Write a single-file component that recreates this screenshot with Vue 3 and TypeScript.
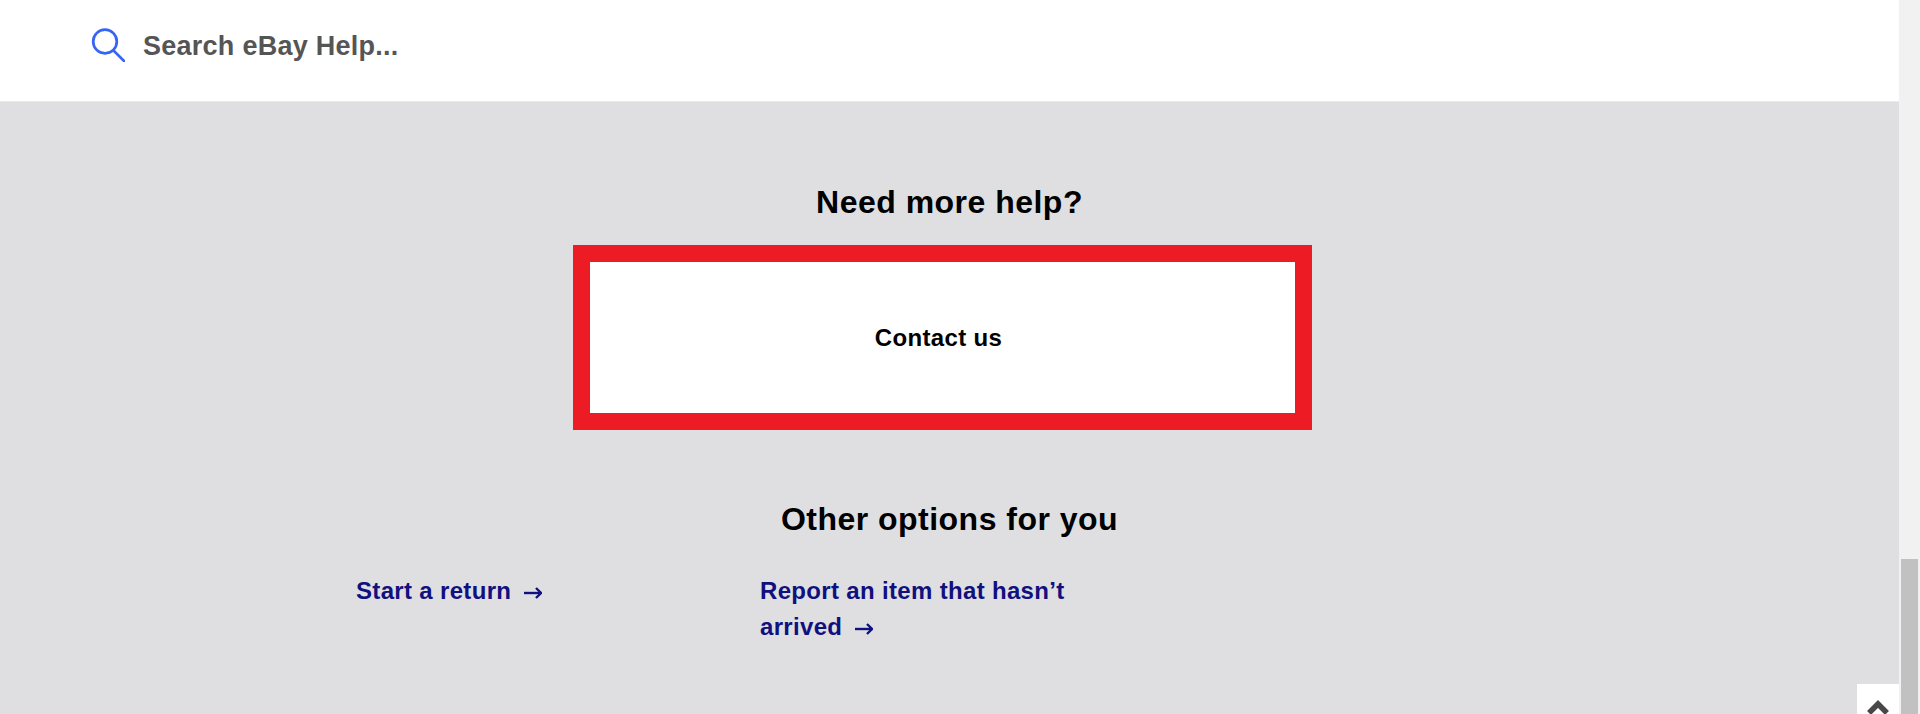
<template>
  <div class="shell">
    <div class="page">
      <header class="search-bar">
        <svg class="search-icon" width="34" height="34" viewBox="0 0 34 34" fill="none">
          <circle cx="14" cy="13.5" r="11.8" stroke="#3665f3" stroke-width="2.7" />
          <path d="M22.5 22.5 L33 33" stroke="#3665f3" stroke-width="2.7" stroke-linecap="round" />
        </svg>
        <span class="search-text">Search eBay Help...</span>
      </header>
      <main class="help">
        <h2 class="help-title">Need more help?</h2>
        <a class="contact-box" href="#">Contact us</a>
        <h2 class="options-title">Other options for you</h2>
        <div class="options">
          <a v-for="opt in options" :key="opt" class="option" href="#">
            {{ opt }}
            <svg class="arrow" width="18" height="12" viewBox="0 0 18 12" fill="none">
              <path d="M0 6 H16" stroke="#10107f" stroke-width="2.4" />
              <path d="M12 1 L17 6 L12 11" stroke="#10107f" stroke-width="2.4" />
            </svg>
          </a>
        </div>
      </main>
      <button class="to-top" aria-label="Back to top">
        <svg width="24" height="16" viewBox="0 0 24 16" fill="none">
          <path d="M3 14 L12 5 L21 14" stroke="#484848" stroke-width="5.5" />
        </svg>
      </button>
    </div>
    <div class="scrollbar"><div class="thumb"></div></div>
  </div>
</template>

<script setup lang="ts">
const options: string[] = ['Start a return', 'Report an item that hasn’t arrived'];
</script>

<style>
html, body { margin: 0; overflow: hidden; }
</style>

<style scoped>
.shell {
  display: flex;
  height: 714px;
  font-family: "Liberation Sans", Arial, sans-serif;
  overflow: hidden;
}
.page {
  position: relative;
  flex: 1;
  display: flex;
  flex-direction: column;
  background: #dfdfe2;
}
.search-bar {
  height: 102px;
  flex: none;
  box-sizing: border-box;
  background: #fff;
  border-bottom: 1px solid #e8e8ee;
  display: flex;
  align-items: center;
  padding: 0 0 12px 91px;
  gap: 18px;
}
.search-icon { flex: none; }
.search-text {
  padding-top: 4px;
  font-size: 27px;
  font-weight: 700;
  color: #555;
  letter-spacing: 0.26px;
}
.help {
  display: flex;
  flex-direction: column;
  align-items: center;
}
.help-title, .options-title {
  margin: 0;
  font-size: 32px;
  font-weight: 700;
  color: #000;
  line-height: 40px;
  letter-spacing: 0.48px;
}
.help-title { margin-top: 80px; }
.contact-box {
  box-sizing: border-box;
  width: 739px;
  height: 185px;
  margin: 23px 15px 0 0;
  border: 17px solid #ed1c24;
  padding-right: 7px;
  background: #fff;
  display: flex;
  align-items: center;
  justify-content: center;
  font-size: 24px;
  font-weight: 700;
  letter-spacing: 0.35px;
  color: #000;
  text-decoration: none;
}
.options-title { margin-top: 69px; }
.options {
  align-self: flex-start;
  display: flex;
  margin: 34px 0 0 356px;
}
.option {
  width: 330px;
  margin-right: 74px;
  font-size: 24px;
  font-weight: 700;
  letter-spacing: 0.33px;
  line-height: 36px;
  color: #10107f;
  text-decoration: none;
}
.arrow { margin-left: 6px; }
.to-top {
  position: absolute;
  right: 0;
  bottom: 0;
  width: 42px;
  height: 30px;
  padding: 15px 0 0;
  border: 0;
  background: #fff;
  display: flex;
  justify-content: center;
  align-items: flex-start;
  overflow: hidden;
}
.scrollbar {
  flex: none;
  width: 21px;
  background: #f1f1f1;
  padding: 559px 2px 0;
  box-sizing: border-box;
}
.thumb { height: 155px; background: #c1c1c1; }
</style>
